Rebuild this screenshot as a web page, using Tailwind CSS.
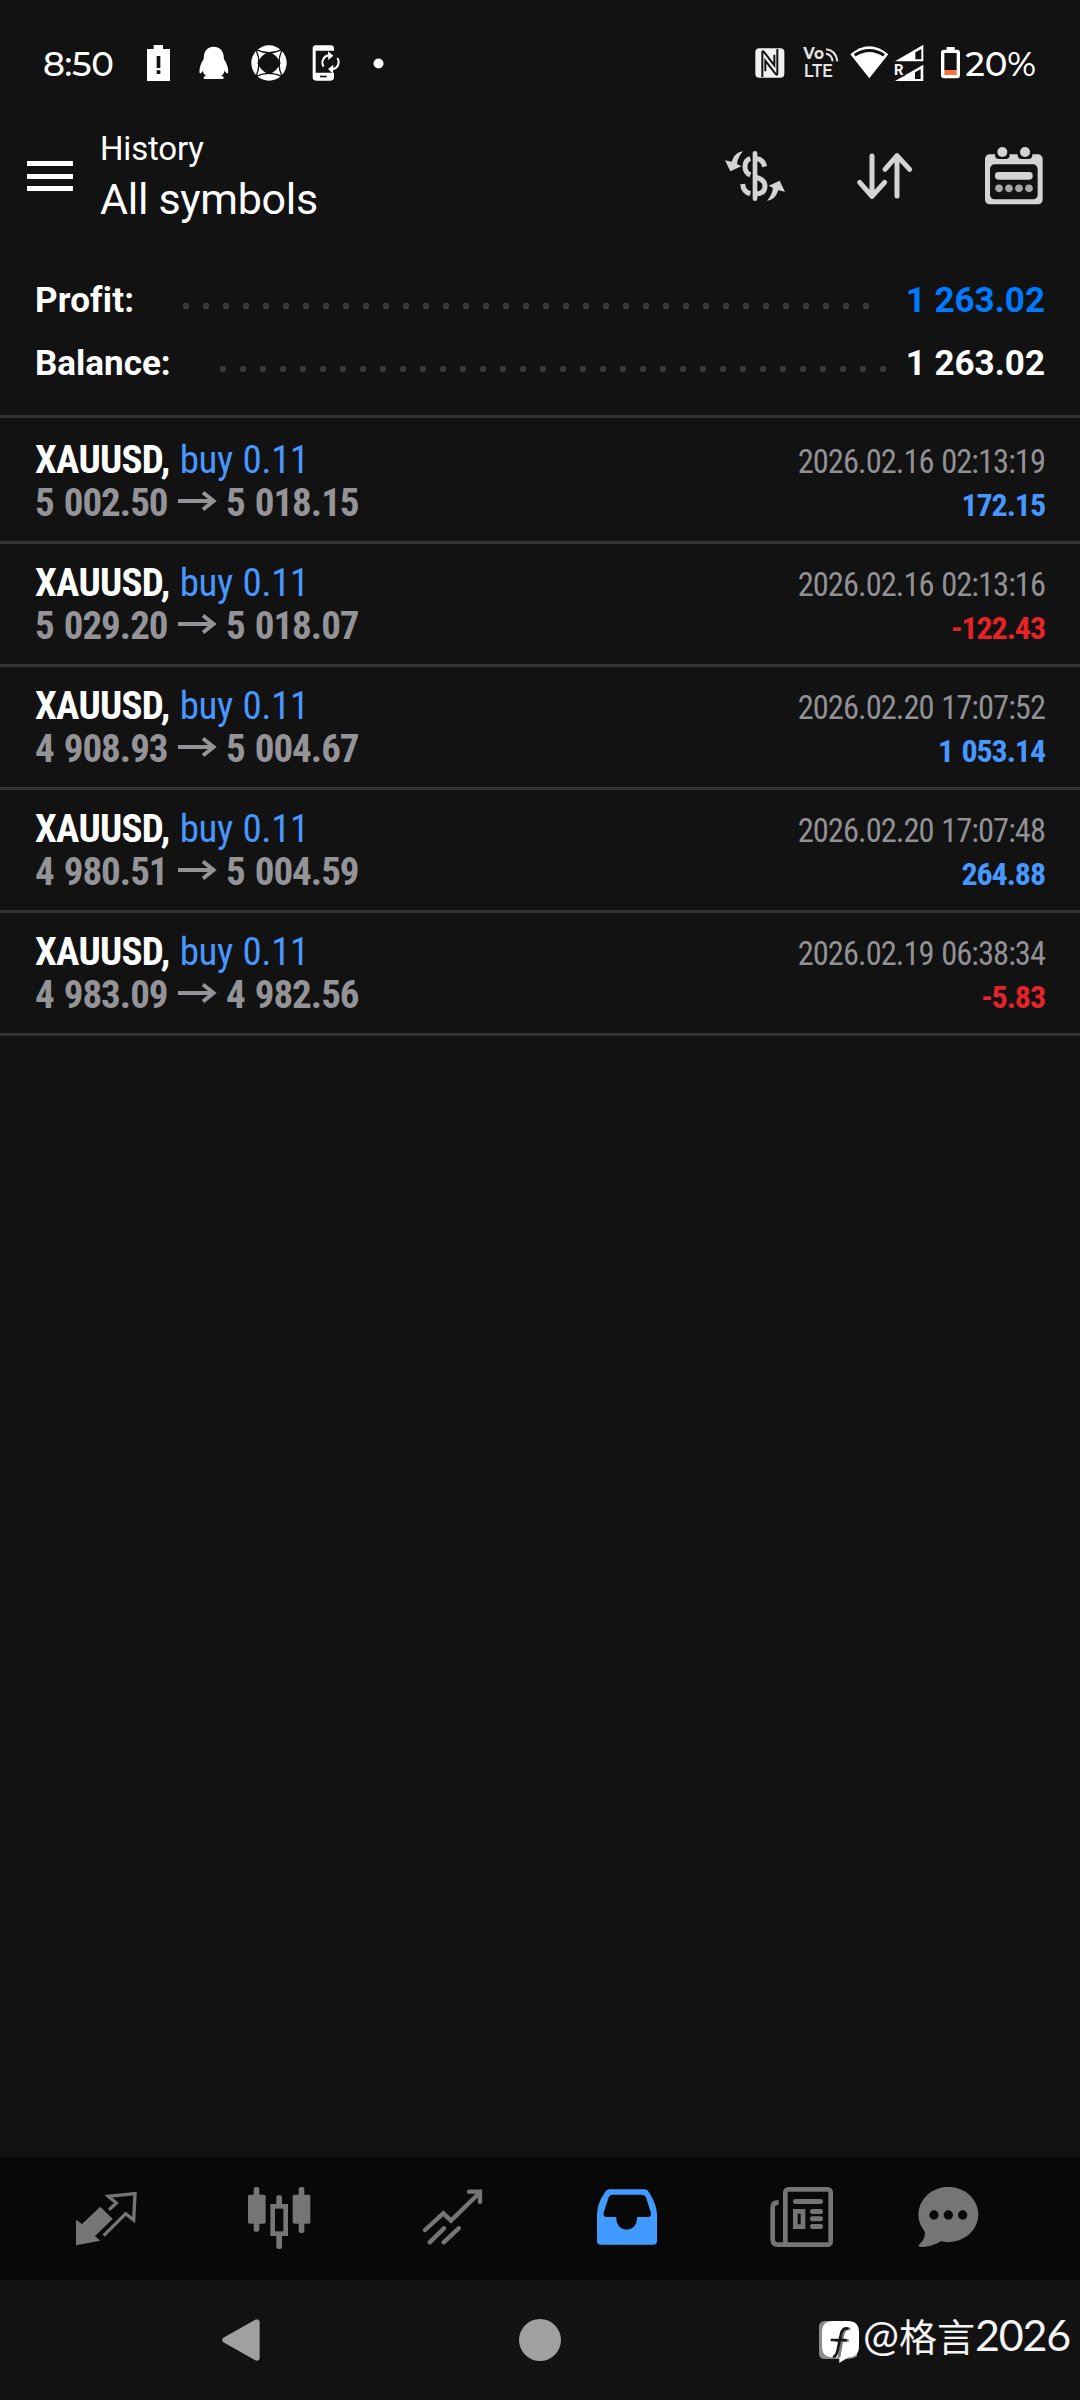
<!DOCTYPE html>
<html lang="en">
<head>
<meta charset="utf-8">
<title>History</title>
<script src="https://cdn.jsdelivr.net/npm/@tailwindcss/browser@4"></script>
</head>
<body class="bg-[#121212]">
<div class="flex h-[2400px] w-[1080px] flex-col overflow-hidden bg-[#121212] font-['Roboto',sans-serif] text-white">

  <!-- Status bar -->
  <div class="flex h-[126px] shrink-0 items-center pl-[43px] pr-[44px] font-['Montserrat',sans-serif] text-[34px] font-medium">
    <span class="w-[104px] pt-0.5 tracking-[-0.3px]">8:50</span>
    <svg class="h-9 w-[23px]" viewBox="441 75 69 108"><path fill="#fff" d="M461 75h28v12h21v96h-69V87h20z"/><path fill="#121212" d="M470 108h11v36h-11zM470 151h11v11h-11z"/></svg>
    <svg class="ml-[29px] h-9 w-[30px]" viewBox="597 75 90 108"><path fill="#fff" d="M641 80C662 80 672 95 672 118C680 130 687 148 684 159C682 163 677 157 674 152C672 160 668 164 664 167C674 170 674 177 664 177H618C608 177 608 170 618 167C614 164 610 160 608 152C606 157 601 163 599 159C597 148 602 130 611 118C611 95 620 80 641 80z"/></svg>
    <svg class="ml-[22px] h-9 w-9" viewBox="751 76 108 108"><circle cx="805" cy="130" r="53" fill="#fff"/><path fill="#121212" d="M805 96Q828 104 840 130Q828 156 805 164Q782 156 770 130Q782 104 805 96z"/><path fill="none" stroke="#121212" stroke-width="4" d="M766 90Q805 108 844 90M766 170Q805 152 844 170M766 90Q784 130 766 170M844 90Q826 130 844 170"/></svg>
    <svg class="ml-[25px] h-9 w-[28px]" viewBox="936 75 84 108"><path fill="#fff" d="M948 76H992Q1002 76 1002 86V92H947V158H1002V172Q1002 182 992 182H948Q938 182 938 172V86Q938 76 948 76z"/><path fill="#121212" d="M960 167h20v5h-20z"/><path fill="none" stroke="#fff" stroke-width="6" d="M971 140A22 22 0 0 1 986 106M1012 114A22 22 0 0 1 997 148"/><path fill="#fff" d="M984 94L1000 107L985 120zM1000 134L984 147L999 161z"/></svg>
    <svg class="ml-[33px] h-[11px] w-[11px]" viewBox="0 0 11 11"><circle cx="5.5" cy="5.5" r="5" fill="#fff"/></svg>

    <svg class="ml-auto h-9 w-[30px]" viewBox="75 75 90 108"><rect x="76" y="85" width="87" height="88" rx="12" fill="#f2f2f2"/><path fill="none" stroke="#121212" stroke-width="6" d="M97 171V96Q98 91 103 97L133 136V104M142 87V160Q142 168 136 161L106 122V154"/></svg>
    <svg class="ml-[18px] h-9 w-[36px]" viewBox="218 75 108 108"><g fill="#e4e4e4" font-family="Montserrat, sans-serif" font-weight="700"><text x="219" y="117" font-size="46" textLength="62" lengthAdjust="spacingAndGlyphs">Vo</text><text x="220" y="172" font-size="53" textLength="88" lengthAdjust="spacingAndGlyphs" font-weight="600">LTE</text></g><path fill="none" stroke="#e4e4e4" stroke-width="6" d="M287 88Q317 91 321 124M287 101Q304 103 307 124"/></svg>
    <svg class="ml-[11px] h-9 w-[39px]" viewBox="362 75 117 108"><path fill="#fff" d="M363 103Q420 54 477 103L420 175z"/><path fill="none" stroke="#121212" stroke-width="9" d="M376 106Q420 77 464 106"/></svg>
    <svg class="ml-[5px] h-[38px] w-[30px]" viewBox="494 70 90 114"><path fill="#fff" d="M497 122L582 72V122z"/><path fill="#121212" d="M558 95L576 85V116H558z"/><path fill="#fff" d="M497 181L582 132V181z"/><path fill="#121212" d="M557 155L574 146V175H557z"/><text x="494" y="163" font-size="44" font-family="Roboto, sans-serif" font-weight="700" fill="#fff" stroke="#121212" stroke-width="7" paint-order="stroke">R</text></svg>
    <svg class="ml-[16px] h-9 w-[21px]" viewBox="630 75 63 108"><path fill="#fff" d="M650 81H674V89H681Q690 89 690 98V166Q690 175 681 175H642Q633 175 633 166V98Q633 89 642 89H650z"/><path fill="#121212" d="M643 99h37v51h-37z"/><path fill="#f4743b" d="M643 150h37v15h-37z"/></svg>
    <span class="ml-1 pt-0.5">20%</span>
  </div>

  <!-- Toolbar -->
  <div class="flex h-[100px] shrink-0 items-center pl-[27px] pr-[36px]">
    <div class="flex w-[46px] flex-col gap-[7.5px]">
      <div class="h-[5px] bg-white"></div><div class="h-[5px] bg-white"></div><div class="h-[5px] bg-white"></div>
    </div>
    <div class="ml-[27px] flex h-[100px] flex-col pt-px">
      <div class="text-[33px] leading-[44px] tracking-[-0.2px]">History</div>
      <div class="text-[43px] leading-[56px] tracking-[-0.3px]">All symbols</div>
    </div>
    <svg class="ml-auto h-[60px] w-[62px]" viewBox="72 78 186 180">
      <g fill="none" stroke="#d4d4d4" stroke-width="15"><path stroke-width="14" stroke-linecap="round" d="M165 100V236"/><path d="M151 116Q135 120 135 141Q135 158 151 165"/><path d="M171 116Q189 118 194 140"/><path d="M170 172Q195 180 195 198Q195 219 171 222"/><path d="M128 192Q130 216 151 221"/></g>
      <g fill="#d4d4d4"><path id="swap" d="M129 94Q104 96 95 125L75 121L91 154L124 139L111 132Q113 112 129 94z"/><use href="#swap" transform="rotate(180 165 168)"/></g>
    </svg>
    <svg class="ml-[70px] h-[60px] w-[58px]" viewBox="469 78 174 180"><path fill="none" stroke="#d4d4d4" stroke-width="15" stroke-linecap="round" stroke-linejoin="round" d="M517 108V229M480 187L517 229L555 187M592 228V107M556 148L592 107L630 148"/></svg>
    <svg class="ml-[70px] h-[60px] w-[60px]" viewBox="852 75 180 180">
      <rect x="855" y="100" width="173" height="150" rx="14" fill="#d4d4d4"/><rect x="870" y="130" width="143" height="105" rx="14" fill="#121212"/>
      <path fill="#121212" d="M885 96h44v6q0 12-12 12h-20q-12 0-12-12zM953 96h44v6q0 12-12 12h-20q-12 0-12-12z"/>
      <g fill="#d4d4d4"><circle cx="907" cy="93" r="15"/><circle cx="975" cy="93" r="15"/><rect x="885" y="153" width="113" height="23" rx="10"/></g>
      <g fill="#a6a6a6"><circle cx="897" cy="202" r="11.5"/><circle cx="927" cy="202" r="11.5"/><circle cx="957" cy="202" r="11.5"/><circle cx="987" cy="202" r="11.5"/></g>
    </svg>
  </div>

  <!-- Totals -->
  <div class="h-[192px] shrink-0 border-b-[3px] border-[#333] pl-[35px] pr-[35px] pt-[43px] text-[35px] font-bold leading-[63px]">
    <div class="flex items-center">
      <span class="w-[141px] tracking-[0.15px]">Profit:</span>
      <span class="mt-2.5 h-5 w-[700px] bg-[radial-gradient(circle_at_center,#383838_3px,transparent_3.6px)] bg-[length:20px_20px]"></span>
      <span class="ml-auto text-[#007aff]">1 263.02</span>
    </div>
    <div class="flex items-center">
      <span class="w-[178px]">Balance:</span>
      <span class="mt-2.5 h-5 w-[680px] bg-[radial-gradient(circle_at_center,#383838_3px,transparent_3.6px)] bg-[length:20px_20px]"></span>
      <span class="ml-auto">1 263.02</span>
    </div>
  </div>

  <!-- Closed positions -->
  <div id="deals" class="flex shrink-0 flex-col pt-[3px] font-['Roboto_Condensed','Roboto',sans-serif]"></div>

  <!-- Tab bar -->
  <div class="mt-auto flex h-[123px] shrink-0 items-center bg-[#080808] pl-[75px]">
    <svg class="h-[63px] w-[63px]" viewBox="105 111 189 189"><path fill="#757575" d="M108 209L126 222L181 170L218 207L165 258L181 272L108 286z"/><path fill="none" stroke="#757575" stroke-width="10" d="M207 179L229 159L205 139L285 131L281 210L257 191L191 257"/></svg>
    <svg class="ml-[109px] h-[63px] w-[65px]" viewBox="621 111 195 189"><g fill="#757575"><rect x="624" y="134" width="53" height="87" rx="5"/><rect x="641" y="111" width="17" height="134" rx="6"/><rect x="758" y="134" width="53" height="87" rx="5"/><rect x="776" y="111" width="17" height="138" rx="6"/><rect x="709" y="136" width="17" height="34" rx="6"/><rect x="709" y="250" width="17" height="47" rx="6"/></g><rect x="698" y="169" width="39" height="82" fill="none" stroke="#757575" stroke-width="14"/></svg>
    <svg class="ml-[110px] h-[63px] w-[62px]" viewBox="1146 111 186 189"><path fill="none" stroke="#757575" stroke-width="13" stroke-linecap="round" d="M1155 240L1210 190L1233 212L1318 129M1287 125H1320V156M1169 277L1212 235M1211 277L1256 235"/></svg>
    <svg class="ml-[112px] h-[63px] w-[62px]" viewBox="108 111 186 189"><path fill="#419bff" fill-rule="evenodd" d="M148 118H254Q262 118 268 128Q291 165 291 195V273Q291 284 280 284H122Q111 284 111 273V195Q111 160 134 128Q140 118 148 118zM157 134Q149 134 146 142L131 188Q129 201 140 201H169V208A31 31 0 0 0 231 208V201H264Q274 201 273 190L258 142Q254 134 246 134z"/></svg>
    <svg class="ml-[111px] h-[63px] w-[65px]" viewBox="627 111 195 189"><g fill="none" stroke="#757575" stroke-width="14"><rect x="676" y="118" width="136" height="166" rx="9"/><path d="M656 157Q638 157 638 172V268Q638 284 654 284H680"/><rect x="706" y="184" width="23" height="46"/></g><g fill="#757575"><rect x="699" y="147" width="90" height="15" rx="7"/><rect x="750" y="177" width="39" height="15" rx="7"/><rect x="750" y="199" width="39" height="15" rx="7"/><rect x="750" y="222" width="39" height="15" rx="7"/></g></svg>
    <svg class="ml-[83px] h-[63px] w-[63px]" viewBox="1070 111 189 189"><ellipse cx="1164" cy="193.500" rx="90" ry="83" fill="#757575"/><path fill="#757575" d="M1090 235Q1103 262 1074 287Q1078 292 1088 291Q1122 288 1147 270z"/><g fill="#080808"><circle cx="1121" cy="195" r="14"/><circle cx="1164" cy="195" r="14"/><circle cx="1207" cy="195" r="14"/></g></svg>
  </div>

  <!-- System navigation -->
  <div class="flex h-[120px] shrink-0 items-center pl-[221px]">
    <svg class="h-[42px] w-[40px]" viewBox="123 147 120 126"><path fill="#a0a0a0" stroke="#a0a0a0" stroke-width="18" stroke-linejoin="round" d="M136 210L230 157V263z"/></svg>
    <div class="ml-[258px] h-[42px] w-[42px] rounded-full bg-[#a0a0a0]"></div>
    <svg class="ml-[257px] mt-[3px] h-[43px] w-[42px]" viewBox="115 150 126 129"><rect x="118" y="153" width="100" height="114" rx="16" fill="#8c8c8c"/><path fill="#8c8c8c" d="M200 267Q225 266 232 258V250z"/><path fill="#fff" d="M160 153H204Q238 153 238 187V228Q238 262 206 262L179 279V262H160Q127 262 127 228V187Q127 153 160 153z"/><path fill="none" stroke="#777" stroke-width="8" d="M212 177Q193 172 189 198L178 262M166 212H207"/><path fill="none" stroke="#161616" stroke-width="8" d="M206 176Q187 171 183 196L175 236Q171 259 160 261M153 210H201"/></svg>
    <div class="mb-[10px] ml-[3px] flex items-baseline font-['Lato','Noto_Sans_CJK_SC',sans-serif] leading-[60px] text-[#f4f4f4]">
      <span class="text-[43px]">@</span><span class="text-[38px]">格言</span><span class="text-[43px] tracking-[-1.2px]">2026</span>
    </div>
  </div>
</div>

<script>
  const deals = [
    ['5 002.50', '5 018.15', '2026.02.16 02:13:19', '172.15'],
    ['5 029.20', '5 018.07', '2026.02.16 02:13:16', '-122.43'],
    ['4 908.93', '5 004.67', '2026.02.20 17:07:52', '1 053.14'],
    ['4 980.51', '5 004.59', '2026.02.20 17:07:48', '264.88'],
    ['4 983.09', '4 982.56', '2026.02.19 06:38:34', '-5.83'],
  ];
  document.getElementById('deals').innerHTML = deals.map(([open, close, time, profit]) => `
    <div class="h-[123px] border-b-[3px] border-[#333] pl-[35px] pr-[35px] pt-[17.5px] text-[39px] leading-[43px]">
      <div class="flex h-[43px] items-baseline">
        <span class="font-bold tracking-[-0.7px]">XAUUSD,</span>
        <span class="ml-[10px] tracking-[-0.4px] text-[#4797ff] [word-spacing:1px]">buy 0.11</span>
        <span class="ml-auto text-[32.5px] tracking-[-0.95px] text-[#919195] [word-spacing:1px]">${time}</span>
      </div>
      <div class="flex h-[43px] items-baseline font-bold tracking-[-1px] text-[#949498] [word-spacing:2px]">
        <span class="w-[133px] whitespace-nowrap">${open}</span>
        <svg class="mb-[5px] ml-[10px] h-[22px] w-[40px] self-center" viewBox="0 0 40 22"><path d="M0 11H36M25 2.500L35.500 11L25 19.500" fill="none" stroke="#949498" stroke-width="4"/></svg>
        <span class="ml-[8px]">${close}</span>
        <span class="ml-auto text-[32px] tracking-[-1.1px] ${profit[0] === '-' ? 'text-[#e62328]' : 'text-[#4797ff]'}">${profit}</span>
      </div>
    </div>`).join('');
</script>
</body>
</html>
